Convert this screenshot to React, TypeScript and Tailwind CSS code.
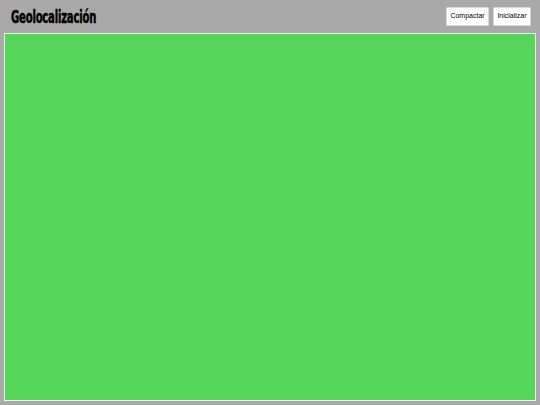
import React from "react";

const App = () => {
  return (
    <div className="w-[540px] h-[405px] bg-[#a9a9a9] flex flex-col font-['Liberation_Sans',Arial,sans-serif]">
      <header className="h-[33px] flex items-center justify-between pl-[11px] pr-[9px]">
        <h1 className="inline-block text-[18px] leading-none font-black text-black tracking-[-0.3px] font-['DejaVu_Sans_Condensed','Liberation_Sans_Narrow',sans-serif] origin-left scale-x-[0.62] [-webkit-text-stroke:0.5px_black]">
          Geolocalización
        </h1>
        <div className="flex gap-[4px]">
          <button className="h-[19px] w-[43px] bg-white border border-[#d8d8d8] rounded-[1px] text-[7px] text-black">
            Compactar
          </button>
          <button className="h-[19px] w-[38px] bg-white border border-[#d8d8d8] rounded-[1px] text-[7px] text-black">
            Inicializar
          </button>
        </div>
      </header>
      <div className="flex-1 mx-[4px] mb-[4px] bg-[#55d55a] border border-[#e6f5e6]" />
    </div>
  );
};

export default App;
